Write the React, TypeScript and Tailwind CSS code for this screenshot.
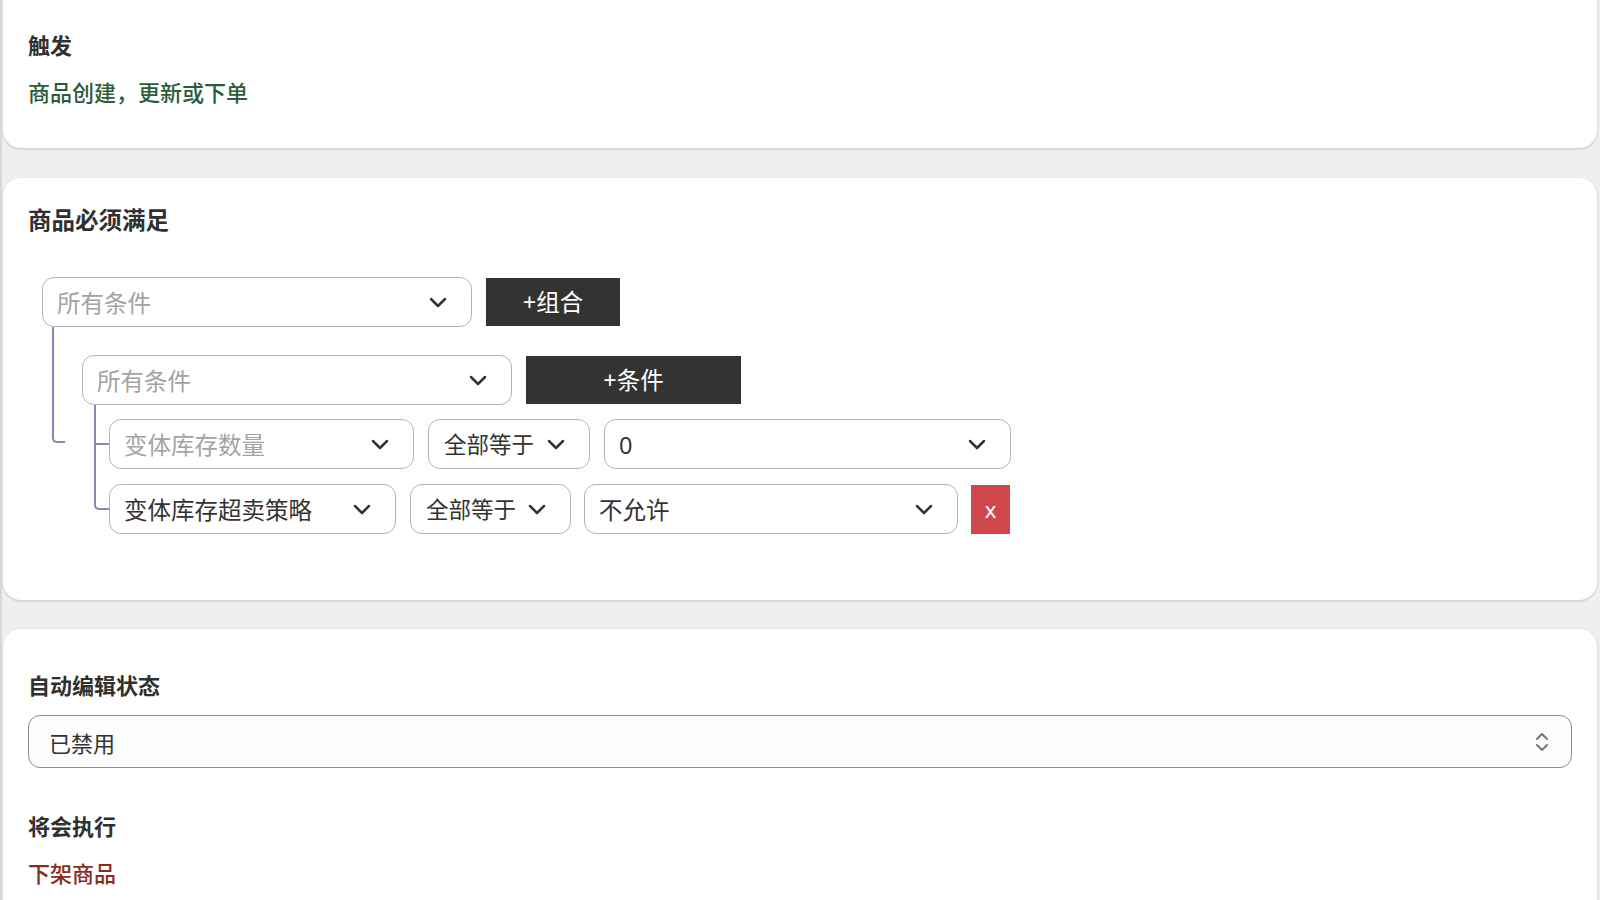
import React from "react";

const LINE = "border-[#8488b3]";

function Chevron() {
  return (
    <svg width="18" height="11" viewBox="0 0 18 11" fill="none" className="shrink-0">
      <polyline points="2,2 9,9 16,2" stroke="#333" strokeWidth="2.5" strokeLinecap="round" strokeLinejoin="round" />
    </svg>
  );
}

function UpDown() {
  return (
    <svg width="14" height="22" viewBox="0 0 14 22" fill="none" className="shrink-0">
      <polyline points="2,8 7,3 12,8" stroke="#777" strokeWidth="2" strokeLinecap="round" strokeLinejoin="round" />
      <polyline points="2,14 7,19 12,14" stroke="#777" strokeWidth="2" strokeLinecap="round" strokeLinejoin="round" />
    </svg>
  );
}

function Select({
  text,
  width,
  placeholder = false,
  pl = "pl-[14px]",
  size = "text-[23.5px]",
}: {
  text: string;
  width: string;
  placeholder?: boolean;
  pl?: string;
  size?: string;
}) {
  return (
    <div className={`${width} h-[50px] shrink-0 flex items-center justify-between rounded-[12px] border border-[#b3b3b3] bg-white ${pl} pr-[24px]`}>
      <span className={`${size} leading-none whitespace-nowrap pt-[3px] ${placeholder ? "text-[#a3a3a3]" : "text-[#333]"}`}>{text}</span>
      <Chevron />
    </div>
  );
}

function DarkButton({ label, width }: { label: string; width: string }) {
  return (
    <button className={`${width} h-[48px] shrink-0 bg-[#333333] text-white text-[23.5px] leading-none pt-[2px] flex items-center justify-center`}>
      {label}
    </button>
  );
}

export default function App() {
  return (
    <div className="min-h-screen bg-[#efefef] border-l-2 border-[#d7d7d7] pl-px pr-[3px] font-['Noto_Sans','Noto_Sans_CJK_SC',sans-serif] text-[#333] overflow-hidden">
      {/* trigger */}
      <div className="bg-white rounded-b-[18px] shadow-[0_1px_3px_rgba(0,0,0,0.18)] px-[25px] pt-[30px] pb-[41px]">
        <h2 className="text-[22px] leading-[30px] font-bold text-[#303030]">触发</h2>
        <p className="mt-[17px] text-[22px] leading-[30px] font-medium text-[#2c5c38]">商品创建，更新或下单</p>
      </div>

      {/* conditions */}
      <div className="mt-[30px] bg-white rounded-[18px] shadow-[0_1px_3px_rgba(0,0,0,0.18)] px-[25px] pt-[26px] pb-[66px]">
        <h2 className="text-[23.5px] leading-[32px] font-bold text-[#303030]">商品必须满足</h2>

        <div className="mt-[41px] ml-[14px]">
          <div className="flex items-center gap-[14px]">
            <Select text="所有条件" width="w-[430px]" placeholder />
            <DarkButton label="+组合" width="w-[134px]" />
          </div>

          <div className="flex ml-[10px]">
            <div className={`w-[13px] h-[116px] shrink-0 border-l-2 border-b-2 ${LINE} rounded-bl-[5px]`} />
            <div className="ml-[17px] mt-[28px]">
              <div className="flex items-center gap-[14px]">
                <Select text="所有条件" width="w-[430px]" placeholder />
                <DarkButton label="+条件" width="w-[215px]" />
              </div>

              <div className="ml-[12px] flex flex-col">
                <div className={`h-[14px] border-l-2 ${LINE}`} />
                <div className={`flex items-center border-l-2 ${LINE} pb-[15px]`}>
                  <div className="w-[13px] h-[2px] bg-[#8488b3]" />
                  <div className="flex gap-[14px]">
                    <Select text="变体库存数量" width="w-[305px]" placeholder />
                    <Select text="全部等于" width="w-[162px]" pl="pl-[15px]" size="text-[22.5px]" />
                    <Select text="0" width="w-[407px]" />
                  </div>
                </div>
                <div className="flex items-start">
                  <div className={`w-[15px] h-[26px] shrink-0 border-l-2 border-b-2 ${LINE} rounded-bl-[5px]`} />
                  <div className="flex items-center">
                    <Select text="变体库存超卖策略" width="w-[287px]" />
                    <div className="w-[14px]" />
                    <Select text="全部等于" width="w-[161px]" pl="pl-[15px]" size="text-[22.5px]" />
                    <div className="w-[13px]" />
                    <Select text="不允许" width="w-[374px]" />
                    <div className="w-[13px]" />
                    <button className="w-[39px] h-[49px] bg-[#cf464b] text-white text-[22px] leading-none flex items-center justify-center">x</button>
                  </div>
                </div>
              </div>
            </div>
          </div>
        </div>
      </div>

      {/* action */}
      <div className="mt-[29px] bg-white rounded-[18px] shadow-[0_1px_3px_rgba(0,0,0,0.18)] px-[25px] pt-[41px] pb-[40px]">
        <h2 className="text-[22px] leading-[30px] font-bold text-[#303030]">自动编辑状态</h2>
        <div className="mt-[15px] h-[53px] flex items-center justify-between rounded-[12px] border border-[#8c8c8c] bg-[#fcfcfc] pl-[20px] pr-[22px]">
          <span className="text-[22px] leading-none pt-[2px] text-[#333]">已禁用</span>
          <UpDown />
        </div>
        <h2 className="mt-[43px] text-[22px] leading-[30px] font-bold text-[#303030]">将会执行</h2>
        <p className="mt-[17px] text-[22px] leading-[30px] font-medium text-[#8a2c1c]">下架商品</p>
      </div>
    </div>
  );
}
